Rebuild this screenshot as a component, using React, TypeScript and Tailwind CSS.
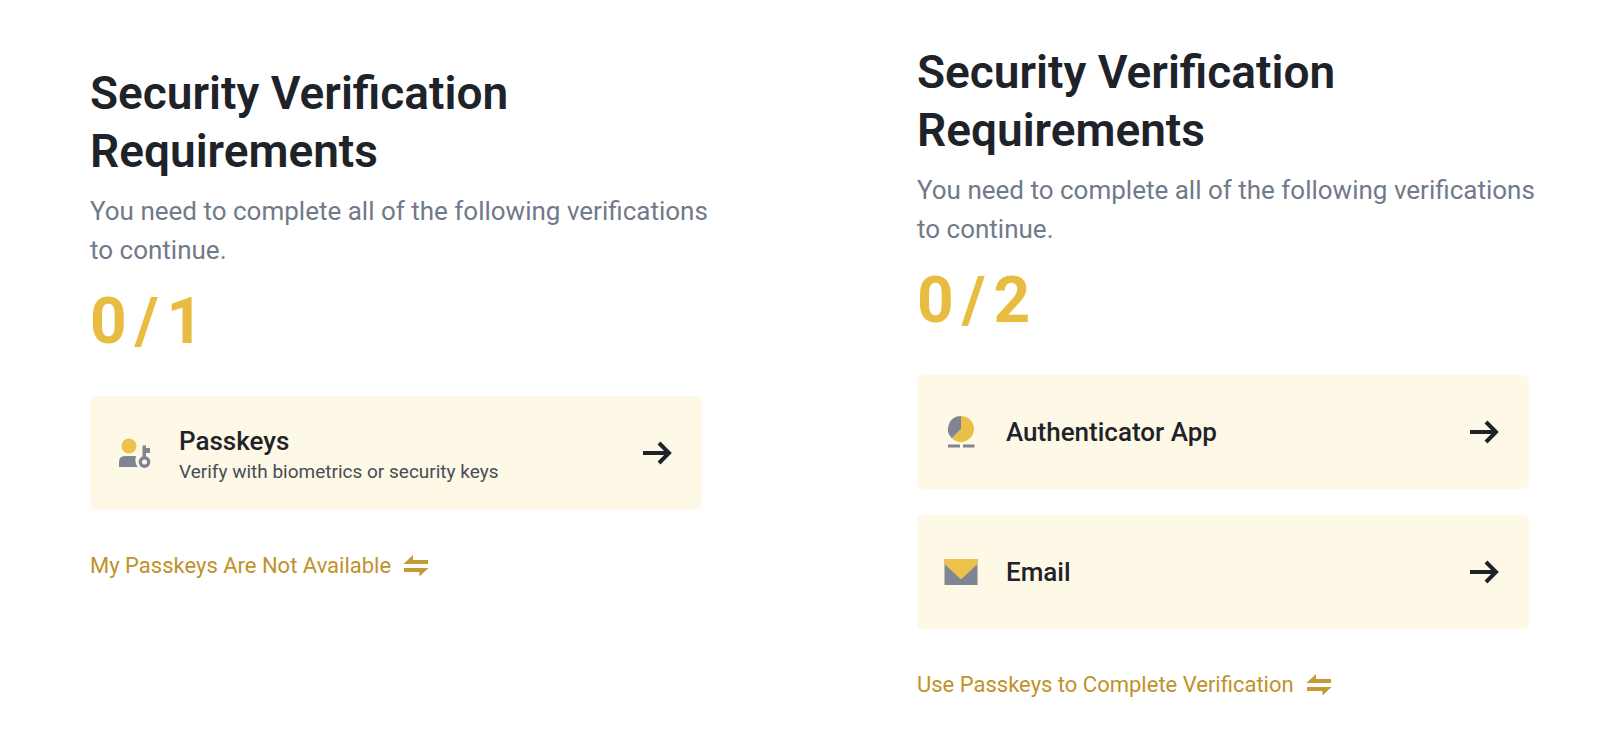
import type { ReactNode } from 'react'

type Method = {
  key: string
  title: string
  description?: string
  icon: ReactNode
}

interface PanelProps {
  total: number
  methods: Method[]
  switchLabel: string
  className: string
}

export default function App() {
  return (
    <main className="grid grid-cols-2 items-start gap-[215px] bg-white pl-[90px] pr-[71px] font-['Roboto','Liberation_Sans',sans-serif]">
      <VerificationPanel
        total={1}
        methods={[
          {
            key: 'passkeys',
            title: 'Passkeys',
            description: 'Verify with biometrics or security keys',
            icon: <PasskeyIcon />,
          },
        ]}
        switchLabel="My Passkeys Are Not Available"
        className="pt-16"
      />
      <VerificationPanel
        total={2}
        methods={[
          { key: 'authenticator', title: 'Authenticator App', icon: <AuthenticatorIcon /> },
          { key: 'email', title: 'Email', icon: <EmailIcon /> },
        ]}
        switchLabel="Use Passkeys to Complete Verification"
        className="pt-[43px]"
      />
    </main>
  )
}

function VerificationPanel({ total, methods, switchLabel, className }: PanelProps) {
  return (
    <section className={className}>
      <h1 className="text-[46px] leading-[58px] font-semibold text-[#1e2329]">
        Security Verification
        <br />
        Requirements
      </h1>
      <p className="mt-3 text-[26px] leading-[39px] whitespace-nowrap text-[#707a8a]">
        You need to complete all of the following verifications
        <br />
        to continue.
      </p>
      <p className="mt-5 flex gap-2 text-[64px] leading-[64px] font-bold text-[#e8bb41]">
        <span>0</span>
        <span>/</span>
        <span>{total}</span>
      </p>

      {/* Methods */}
      <div className="mt-[42px] flex flex-col gap-[26px]">
        {methods.map(m => (
          <button
            key={m.key}
            className="flex h-[114px] w-full items-center rounded-md bg-[#fef8e6] px-[27px] text-left"
          >
            <span className="mr-6 shrink-0">{m.icon}</span>
            <span className={m.description ? 'flex-1 pt-1' : 'flex-1'}>
              <span className="block text-[26px] leading-[34px] font-medium text-[#1e2329]">{m.title}</span>
              {m.description && (
                <span className="block text-[19px] leading-7 text-[#474d57]">{m.description}</span>
              )}
            </span>
            <ArrowIcon />
          </button>
        ))}
      </div>

      {/* Switch to the other set of methods */}
      <a href="#" className="mt-10 flex items-center gap-3 text-[22px] leading-8 text-[#c0922a]">
        {switchLabel}
        <SwapIcon />
      </a>
    </section>
  )
}

function ArrowIcon() {
  return (
    <svg width="36" height="36" viewBox="0 0 36 36" fill="none" stroke="#1e2329" strokeWidth="4" aria-hidden="true">
      <path d="M4 18H30" />
      <path d="M20 8L30 18L20 28" />
    </svg>
  )
}

function SwapIcon() {
  return (
    <svg width="26" height="24" viewBox="0 0 26 24" fill="#c49a32" aria-hidden="true">
      <path d="M10 1V6H25V10H0.5Z" />
      <path d="M1 14H25.5L16.5 22.5V18H1Z" />
    </svg>
  )
}

function PasskeyIcon() {
  return (
    <svg width="38" height="38" viewBox="0 0 38 38" aria-hidden="true">
      <circle cx="12" cy="12" r="7.5" fill="#ecc24d" />
      <path d="M2 33V28Q2 22 8 22H19Q18 25 18.5 28Q19 31 21 33Z" fill="#7f8592" />
      <path d="M25.5 11.5H29V14H33V19H29V24H25.5Z" fill="#7f8592" />
      <circle cx="27.500" cy="28" r="4.2" fill="none" stroke="#7f8592" strokeWidth="3.4" />
    </svg>
  )
}

function AuthenticatorIcon() {
  return (
    <svg width="38" height="38" viewBox="0 0 38 38" aria-hidden="true">
      <path d="M17 16V3A13 13 0 1 1 7.8 25.2Z" fill="#eabf47" />
      <path d="M17 16V3A13 13 0 0 0 7.8 25.2Z" fill="#7f8592" />
      <path d="M4 31.5H16V34.5H4ZM19 31.5H30.5V34.5H19Z" fill="#7f8592" />
    </svg>
  )
}

function EmailIcon() {
  return (
    <svg width="38" height="38" viewBox="0 0 38 38" aria-hidden="true">
      <path d="M0.5 6H33.5V32H0.5Z" fill="#7f8592" />
      <path d="M0.5 6H33.5V11L17.5 26H16.5L0.5 11Z" fill="#ecc24d" />
    </svg>
  )
}
